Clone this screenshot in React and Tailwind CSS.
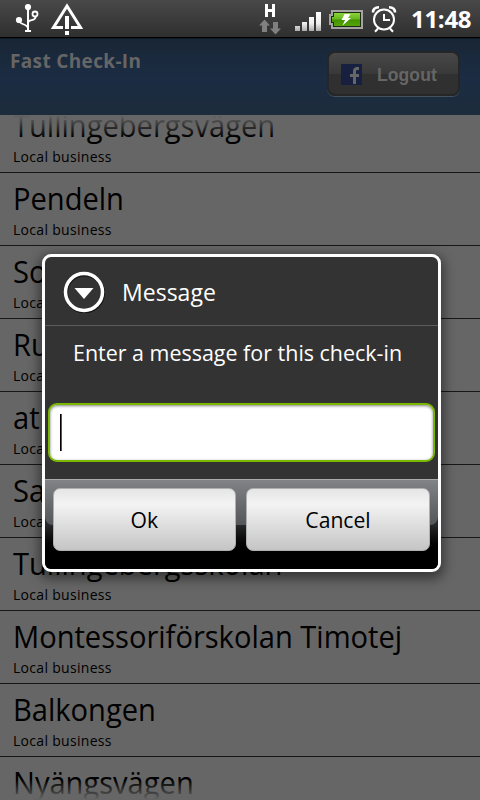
import React from "react";

const places = [
  "Tullingebergsvägen",
  "Pendeln",
  "So",
  "Ru",
  "at",
  "Sa",
  "Tullingebergsskolan",
  "Montessoriförskolan Timotej",
  "Balkongen",
  "Nyängsvägen",
];

function StatusBar() {
  return (
    <header className="flex h-[38px] shrink-0 items-center justify-between border-b border-black bg-linear-to-b from-[#494949] to-[#2f2f2f]">
      <svg width="100" height="37" viewBox="0 0 100 37" fill="none">
        <g stroke="#fff" strokeWidth="1.8">
          <path d="M28 6V31" strokeWidth="2" />
          <path d="M19 20C19 25.500 28 23 28 29M35.500 17C35.500 21.500 28 19 28 23" />
          <circle cx="35" cy="14" r="2.500" />
          <path d="M25 31h6" strokeWidth="2" />
        </g>
        <circle cx="28" cy="7" r="3.100" fill="#fff" />
        <circle cx="19" cy="20" r="3.100" fill="#fff" />
        <path d="M63 27.500H53.500L67 6L80.500 27.500H71" stroke="#fff" strokeWidth="3" />
        <path d="M65 16h4v13h-4zM65 31h4v4h-4z" fill="#fff" />
      </svg>
      <div className="flex items-center">
        <svg width="145" height="37" viewBox="255 0 145 37" fill="none">
          <defs>
            <linearGradient id="battery" x1="0" y1="0" x2="0" y2="1">
              <stop offset="0" stopColor="#8bd33e" />
              <stop offset=".48" stopColor="#66b51c" />
              <stop offset=".52" stopColor="#429300" />
              <stop offset="1" stopColor="#55a50a" />
            </linearGradient>
            <linearGradient id="signal" x1="0" y1="12" x2="0" y2="31" gradientUnits="userSpaceOnUse">
              <stop offset="0" stopColor="#fff" />
              <stop offset=".6" stopColor="#eee" />
              <stop offset="1" stopColor="#aaa" />
            </linearGradient>
          </defs>
          <path d="M266.500 4v13M273.500 4v13M266 10.500h8" stroke="#fff" strokeWidth="3" />
          <path d="M264.500 19.500l5.500 6h-3v6.500h-5v-6.500h-3zM275.500 34.500l-5.500-6h3v-6.500h5v6.500h3z" fill="#808080" />
          <path d="M295 26h5v5h-5zM302 22h5v9h-5zM309 17h5v14h-5zM316 12h5v19h-5z" fill="url(#signal)" />
          <path d="M331 10h32v19h-32v-4h-2v-11h2z" fill="#a4a4a4" />
          <path d="M333 12h28v15h-28v-4h-2v-7h2z" fill="#1d2b10" />
          <path d="M334 13h26v13h-26v-4h-2v-5h2z" fill="url(#battery)" />
          <path d="M344.500 14h6l-2.500 4h3l-8.500 7.500 2.500-5.500h-3.500z" fill="#fff" />
          <g stroke="#fff">
            <circle cx="384" cy="19.500" r="10" strokeWidth="2" />
            <path d="M384 14v6h6" strokeWidth="2" />
            <path d="M378 28.500l-3 3.200M390 28.500l3 3.200" strokeWidth="2" />
            <path d="M373 12.500c0-3.500 2-5.300 6-5.300M395 12.500c0-3.500-2-5.300-6-5.300" strokeWidth="2.600" />
          </g>
        </svg>
        <time className="w-[80px] pt-[1px] pl-[11px] text-[24px] leading-none font-bold tracking-[-0.3px] text-white">11:48</time>
      </div>
    </header>
  );
}

function AppHeader() {
  return (
    <div className="flex h-[77px] shrink-0 items-start justify-between border-t border-[#111a24] bg-linear-to-b from-[#192635] via-[#1b2c43] to-[#1d2c3c] pr-[20px] pl-[10px]">
      <h1 className="pt-[11px] text-[19px] leading-[22px] font-bold tracking-[0.35px] text-[#666]">Fast Check-In</h1>
      <button className="mt-[12px] flex h-[45px] w-[133px] items-center rounded-[8px] border-2 border-[#252626] bg-linear-to-b from-[#484848] from-0% via-[#393939] via-50% to-[#303030] to-52% pl-[12px] shadow-[0_1px_0_#46505c]">
        <svg width="21" height="21" viewBox="0 0 21 21" className="mt-[1px]">
          <path d="M0 0h21v21H0z" fill="#17203f" />
          <path d="M12 20v-7H9v-3h3V7.500C12 4.500 13.500 3 16 3h2v3h-1.500C15.500 6 15 6.500 15 7.500V10h3v3h-3v7z" fill="#666" />
        </svg>
        <span className="pt-[2px] pl-[15px] font-['Liberation_Sans',sans-serif] text-[17.5px] leading-[20px] font-bold tracking-[0.1px] text-[#666]">Logout</span>
      </button>
    </div>
  );
}

function Place({ name }) {
  return (
    <li className="h-[73px] shrink-0 border-b border-[#171717] pt-[8px] pl-[13px] whitespace-nowrap text-black">
      <div className="w-max origin-left scale-x-[0.938] text-[31px] leading-[35px]">{name}</div>
      <div className="pt-[4px] text-[14px] leading-[20px] tracking-[0.3px]">Local business</div>
    </li>
  );
}

function DialogButton({ children }) {
  return (
    <button className="h-[63px] rounded-[7px] border border-[#aeafb0] bg-linear-to-b from-[#e5e5e5] via-[#f3f3f3] via-25% to-[#c5c5c5] text-[22px] text-black">
      <span className="inline-block scale-x-[0.96]">{children}</span>
    </button>
  );
}

function MessageDialog() {
  return (
    <section className="absolute top-[254px] left-[42px] flex h-[318px] w-[399px] flex-col overflow-hidden rounded-[9px] border-3 border-white bg-[#333] text-white shadow-[0_4px_12px_3px_rgba(0,0,0,0.45)]">
      <div className="flex h-[69px] shrink-0 items-center border-b border-[#5c5c5c] pt-[2px] pl-[18px]">
        <svg width="42" height="42" viewBox="0 0 42 42" fill="none">
          <circle cx="21.500" cy="22" r="18.500" stroke="#161616" strokeWidth="4" />
          <circle cx="21" cy="21" r="18.500" stroke="#fff" strokeWidth="3.500" />
          <path d="M11.500 17h19L21 28z" fill="#fff" />
        </svg>
        <h2 className="ml-[17px] origin-left scale-x-[0.96] text-[24px] leading-[30px]">Message</h2>
      </div>
      <p className="h-[77px] w-max shrink-0 origin-left translate-x-[28px] scale-x-[0.975] pt-[12px] text-[22px] leading-[28px] whitespace-nowrap">Enter a message for this check-in</p>
      <div className="mx-[3px] flex h-[59px] shrink-0 items-center rounded-[9px] border-2 border-[#7ab800] bg-white pl-[10px] shadow-[inset_0_1px_3px_rgba(0,0,0,0.5)]">
        <span className="h-[37px] w-[2px] border-l border-black bg-[#555]" />
      </div>
      <div className="mt-[17px] grid h-[90px] shrink-0 grid-cols-1 bg-linear-to-b from-[#292a2b] from-50% to-black to-85%">
        <div className="col-start-1 row-start-1 h-[46px] rounded-b-[8px] border-t border-[#aaabac] bg-linear-to-b from-[#828386] to-[#555658]" />
        <div className="col-start-1 row-start-1 grid grid-cols-[183px_184px] gap-[10px] pt-[9px] pl-[8px]">
          <DialogButton>Ok</DialogButton>
          <DialogButton>Cancel</DialogButton>
        </div>
      </div>
    </section>
  );
}

export default function App() {
  return (
    <main className="relative flex h-[800px] w-[480px] flex-col overflow-hidden bg-[#666] font-['Open_Sans','Noto_Sans',sans-serif]">
      <StatusBar />
      <AppHeader />
      <div className="relative min-h-0 flex-1 overflow-hidden">
        <ul className="-mt-[15px] flex flex-col">
          {places.map((name) => (
            <Place key={name} name={name} />
          ))}
        </ul>
        <div className="absolute inset-x-0 top-0 h-[22px] bg-linear-to-b from-[#666] to-[#66666600]" />
        <div className="absolute inset-x-0 bottom-0 h-[20px] bg-linear-to-t from-[#666] to-[#66666600]" />
      </div>
      <MessageDialog />
    </main>
  );
}
